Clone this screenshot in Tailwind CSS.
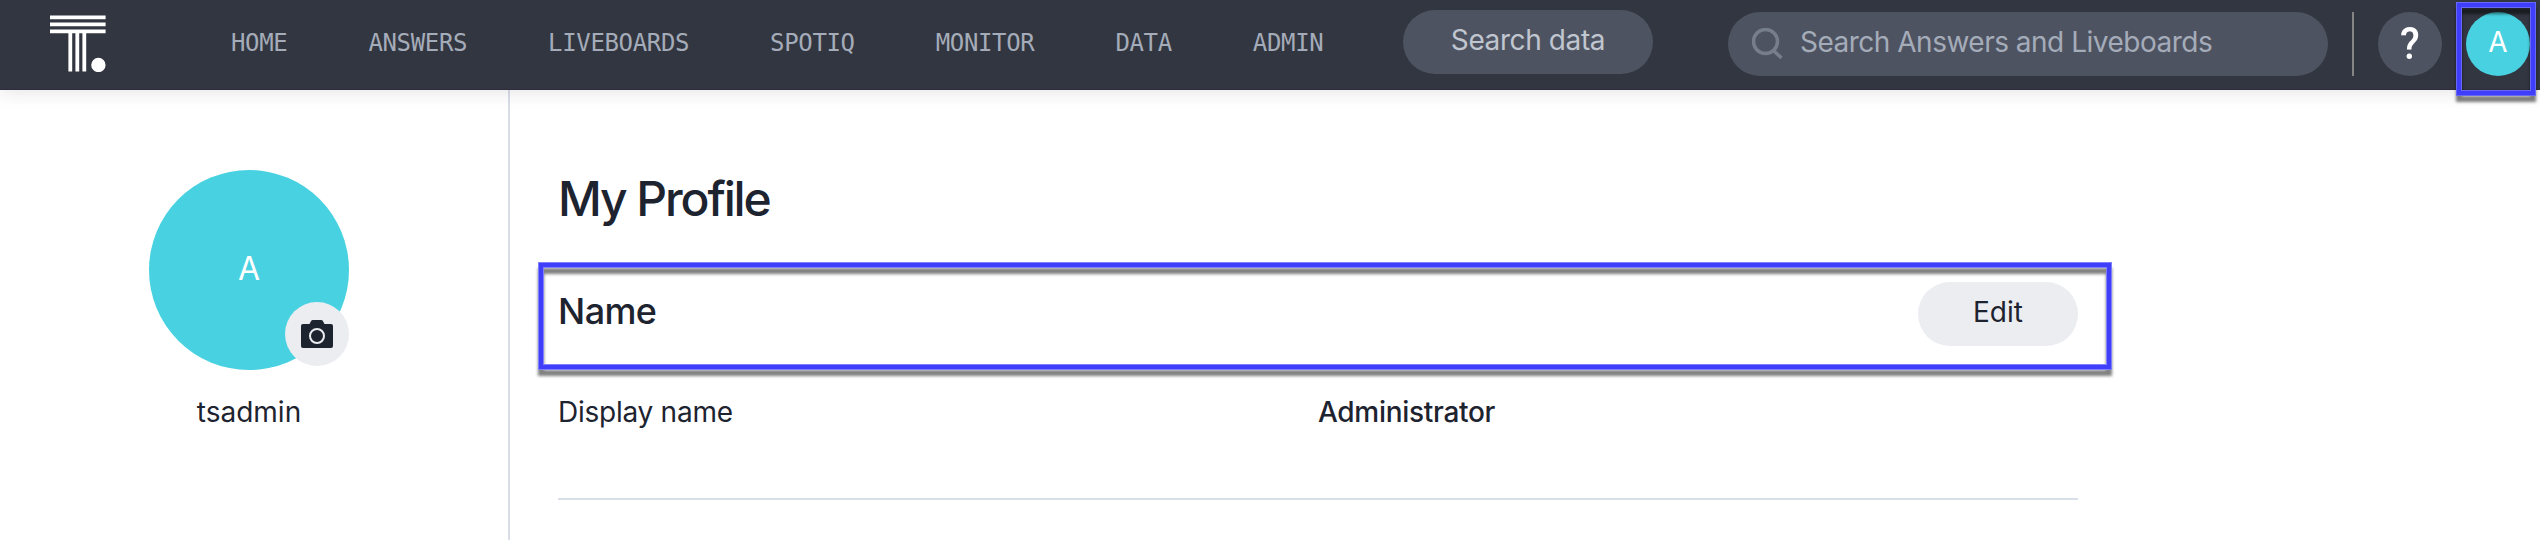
<!DOCTYPE html>
<html lang="en">
<head>
<meta charset="utf-8">
<title>My Profile</title>
<script src="https://cdn.jsdelivr.net/npm/@tailwindcss/browser@4"></script>
</head>
<body class="w-[2540px] h-[540px] overflow-hidden bg-white font-['Inter',sans-serif] text-[28px] leading-[40px] text-[#1d232f]">
<div class="relative h-full flex flex-col">
  <header class="relative z-10 h-[90px] shrink-0 flex items-start bg-[#323640] border-b border-[#2f2b3c] shadow-[0_2px_18px_rgba(40,30,50,0.12)]">
    <svg class="ml-[50px] mt-[15px] w-14 h-[57px] shrink-0" viewBox="0 0 56 57" fill="#fff">
      <path d="M0 .4h55.600v3.800H0zM0 7.400h55.600v3.800H0zM0 14.400h55.600v3.800H0z"/>
      <path d="M18.400 17h3.800v39.600h-3.800zM25.400 17h3.800v39.600h-3.800zM32.400 17h3.800v39.600h-3.800z"/>
      <circle cx="48.4" cy="50" r="7.2"/>
    </svg>
    <nav class="ml-[125px] mt-[23px] w-[1172px] flex gap-[81px] whitespace-nowrap font-['DejaVu_Sans_Mono',monospace] text-[24px] tracking-[-0.35px] text-[#a5acb9]">
      <a>HOME</a><a>ANSWERS</a><a>LIVEBOARDS</a><a>SPOTIQ</a><a>MONITOR</a><a>DATA</a><a>ADMIN</a>
    </nav>
    <button class="mt-[10px] w-[250px] h-16 pb-1 shrink-0 rounded-full bg-[#4e5361] text-[#c0c6cf] flex items-center justify-center whitespace-nowrap tracking-[-0.4px]">Search data</button>
    <div class="ml-[75px] mt-3 w-[600px] h-16 shrink-0 rounded-full bg-[#4e5361] flex items-center pl-6 text-[#a5acb9] whitespace-nowrap">
      <svg class="w-8 h-8 mr-4" viewBox="0 0 32 32" fill="none" stroke="#777e8b" stroke-width="3.5"><circle cx="13.5" cy="13.5" r="12"/><path d="M21.500 22.500l8 7.500"/></svg>
      <span class="mb-1 tracking-[-0.5px]">Search Answers and Liveboards</span>
    </div>
    <div class="ml-6 mt-3 w-0.5 h-16 bg-[#858585]"></div>
    <div class="ml-6 mt-3 w-16 h-16 shrink-0 rounded-full bg-[#4e5361] text-white flex items-center justify-center font-['Roboto',sans-serif] font-medium text-[45px]"><span class="scale-x-90">?</span></div>
    <div class="ml-6 mt-3 w-16 h-16 pb-1 shrink-0 rounded-full bg-[#48d1e0] text-white flex items-center justify-center">A</div>
  </header>

  <div class="flex flex-1 min-h-0">
    <aside class="w-[510px] shrink-0 border-r-2 border-[#d9dde8] pt-20 pr-[10px] flex flex-col items-center">
      <div class="relative w-[200px] h-[200px] rounded-full bg-[#48d1e0] text-white text-[32px] pb-[3px] flex items-center justify-center">A
        <span class="absolute right-0 bottom-1 w-16 h-16 rounded-full bg-[#ebedf1] flex items-center justify-center">
          <svg class="w-8 h-7" viewBox="0 0 32 28"><path fill="#1d232f" d="M2 4h6.500l1.600-3Q10.700 0 11.800 0h8.400q1.100 0 1.700 1l1.600 3H30q2 0 2 2v20q0 2-2 2H2q-2 0-2-2V6q0-2 2-2z"/><circle cx="16" cy="16" r="7" fill="none" stroke="#ebedf1" stroke-width="2"/></svg>
        </span>
      </div>
      <div class="mt-[22px]">tsadmin</div>
    </aside>
    <main class="w-[1568px] pl-12 pt-[79px] flex flex-col">
      <h1 class="text-[48px] leading-[60px] font-medium tracking-[-2.1px]">My Profile</h1>
      <div class="mt-[53px] h-16 flex items-center justify-between">
        <h2 class="mb-1.5 text-[36px] font-medium tracking-[-0.6px]">Name</h2>
        <button class="w-40 h-16 pb-1 rounded-full bg-[#ebedf1] flex items-center justify-center">Edit</button>
      </div>
      <div class="mt-[46px] flex pb-[66px] border-b-2 border-[#d9dfe6]">
        <div class="w-[760px] tracking-[-0.25px]">Display name</div>
        <div class="font-medium tracking-[-0.3px]">Administrator</div>
      </div>
    </main>
  </div>

  <div class="absolute z-20 left-[2457px] top-[3px] w-[78px] h-[92px] border-4 border-[#3f3ffb] shadow-[0_0_0_1px_#6868f4,inset_0_0_0_1px_#6868f4] [filter:drop-shadow(0_6px_1.5px_rgba(0,0,0,0.5))]"></div>
  <div class="absolute z-20 left-[539px] top-[263px] w-[1572px] h-[106px] border-4 border-[#3f3ffb] shadow-[0_0_0_1px_#8080fb,inset_0_0_0_1px_#8080fb] [filter:drop-shadow(0_6px_1.5px_rgba(0,0,0,0.5))]"></div>
</div>
</body>
</html>
